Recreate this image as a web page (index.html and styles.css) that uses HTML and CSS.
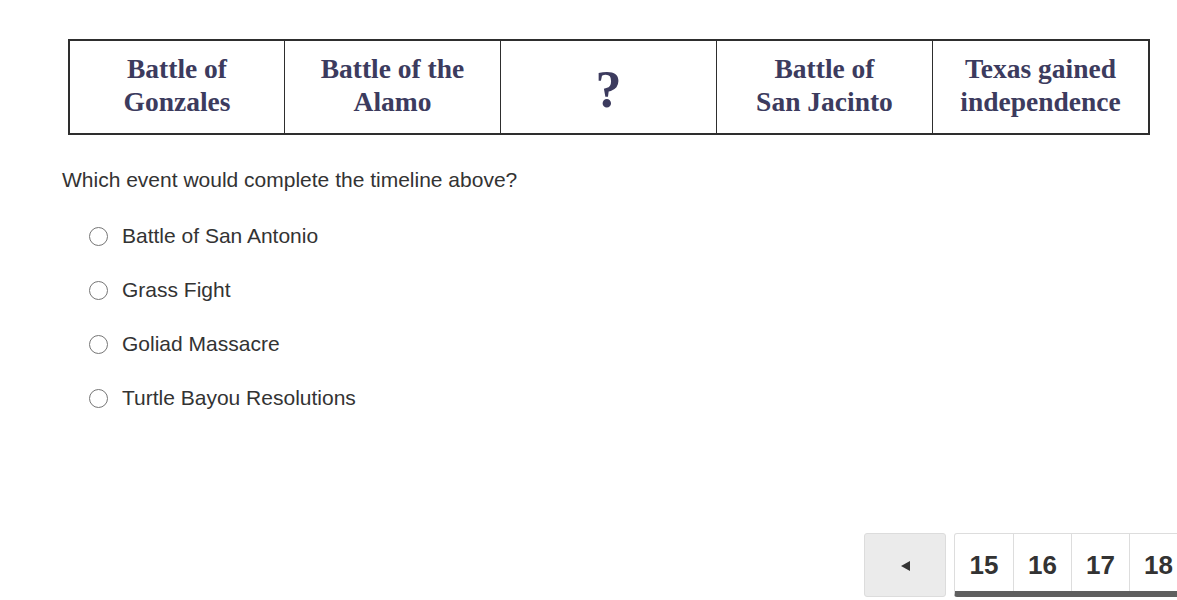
FILE: index.html
```html
<!DOCTYPE html>
<html>
<head>
<meta charset="utf-8">
<link rel="stylesheet" href="styles.css">
</head>
<body>
<div class="page">
  <main class="question">
    <div class="timeline">
      <div class="cell">Battle of<br>Gonzales</div>
      <div class="cell">Battle of the<br>Alamo</div>
      <div class="cell qmark">?</div>
      <div class="cell">Battle of<br>San Jacinto</div>
      <div class="cell">Texas gained<br>independence</div>
    </div>
    <p class="prompt">Which event would complete the timeline above?</p>
    <ul class="options">
      <li class="option"><span class="radio"></span><span>Battle of San Antonio</span></li>
      <li class="option"><span class="radio"></span><span>Grass Fight</span></li>
      <li class="option"><span class="radio"></span><span>Goliad Massacre</span></li>
      <li class="option"><span class="radio"></span><span>Turtle Bayou Resolutions</span></li>
    </ul>
  </main>
  <nav class="pager">
    <button class="prev"><span class="tri"></span></button>
    <div class="pages">
      <span class="pg">15</span>
      <span class="pg">16</span>
      <span class="pg">17</span>
      <span class="pg">18</span>
    </div>
  </nav>
</div>
</body>
</html>
```
FILE: styles.css
```css
html, body {
  margin: 0;
  padding: 0;
  background: #fff;
}
body {
  width: 1177px;
  height: 600px;
  overflow: hidden;
  font-family: "Liberation Sans", Arial, sans-serif;
  color: #333;
}
.page {
  display: flex;
  flex-direction: column;
  height: 600px;
}
.question {
  padding: 39px 0 0 62px;
  flex: 1;
}
.timeline {
  display: grid;
  grid-template-columns: 214px 216px 216px 216px 1fr;
  width: 1082px;
  margin-left: 6px;
  border: 2px solid #2e2e2e;
  box-sizing: border-box;
  height: 96px;
  font-family: "Liberation Serif", "Times New Roman", serif;
  font-weight: bold;
  font-size: 27.5px;
  line-height: 33px;
  color: #3c3b5e;
}
.cell {
  display: flex;
  align-items: center;
  justify-content: center;
  text-align: center;
  border-left: 1.5px solid #2e2e2e;
  padding-bottom: 4px;
}
.cell:first-child {
  border-left: none;
}
.qmark {
  font-size: 52px;
  padding-bottom: 0;
  padding-top: 4px;
}
.prompt {
  margin: 33px 0 0 0;
  font-size: 21px;
  line-height: 24px;
  color: #333;
}
.options {
  list-style: none;
  margin: 32px 0 0 0;
  padding: 0 0 0 27px;
  display: flex;
  flex-direction: column;
  gap: 30px;
}
.option {
  display: flex;
  align-items: center;
  font-size: 21px;
  line-height: 24px;
  color: #333;
  height: 24px;
}
.radio {
  width: 19px;
  height: 19px;
  border: 1px solid #767676;
  border-radius: 50%;
  box-sizing: border-box;
  margin-right: 14px;
  background: #fff;
}
.pager {
  display: flex;
  gap: 8px;
  padding-left: 864px;
  padding-bottom: 3px;
  align-items: flex-start;
}
.prev {
  width: 82px;
  height: 64px;
  background: #ebebeb;
  border: 1px solid #dcdcdc;
  border-radius: 3px;
  display: flex;
  align-items: center;
  justify-content: center;
  padding: 0;
  flex-shrink: 0;
}
.tri {
  width: 0;
  height: 0;
  border-top: 5px solid transparent;
  border-bottom: 5px solid transparent;
  border-right: 9px solid #333;
  margin-top: 2px;
}
.pages {
  display: flex;
  border: 1px solid #ddd;
  border-bottom: 6px solid #5f5f5f;
  border-radius: 3px 0 0 3px;
  flex-shrink: 0;
  box-sizing: border-box;
  height: 64px;
}
.pg {
  width: 58px;
  display: flex;
  align-items: center;
  justify-content: center;
  font-weight: bold;
  font-size: 26px;
  color: #333;
  border-left: 1px solid #ddd;
  box-sizing: border-box;
  padding-top: 5px;
}
.pg:first-child {
  border-left: none;
}
```
